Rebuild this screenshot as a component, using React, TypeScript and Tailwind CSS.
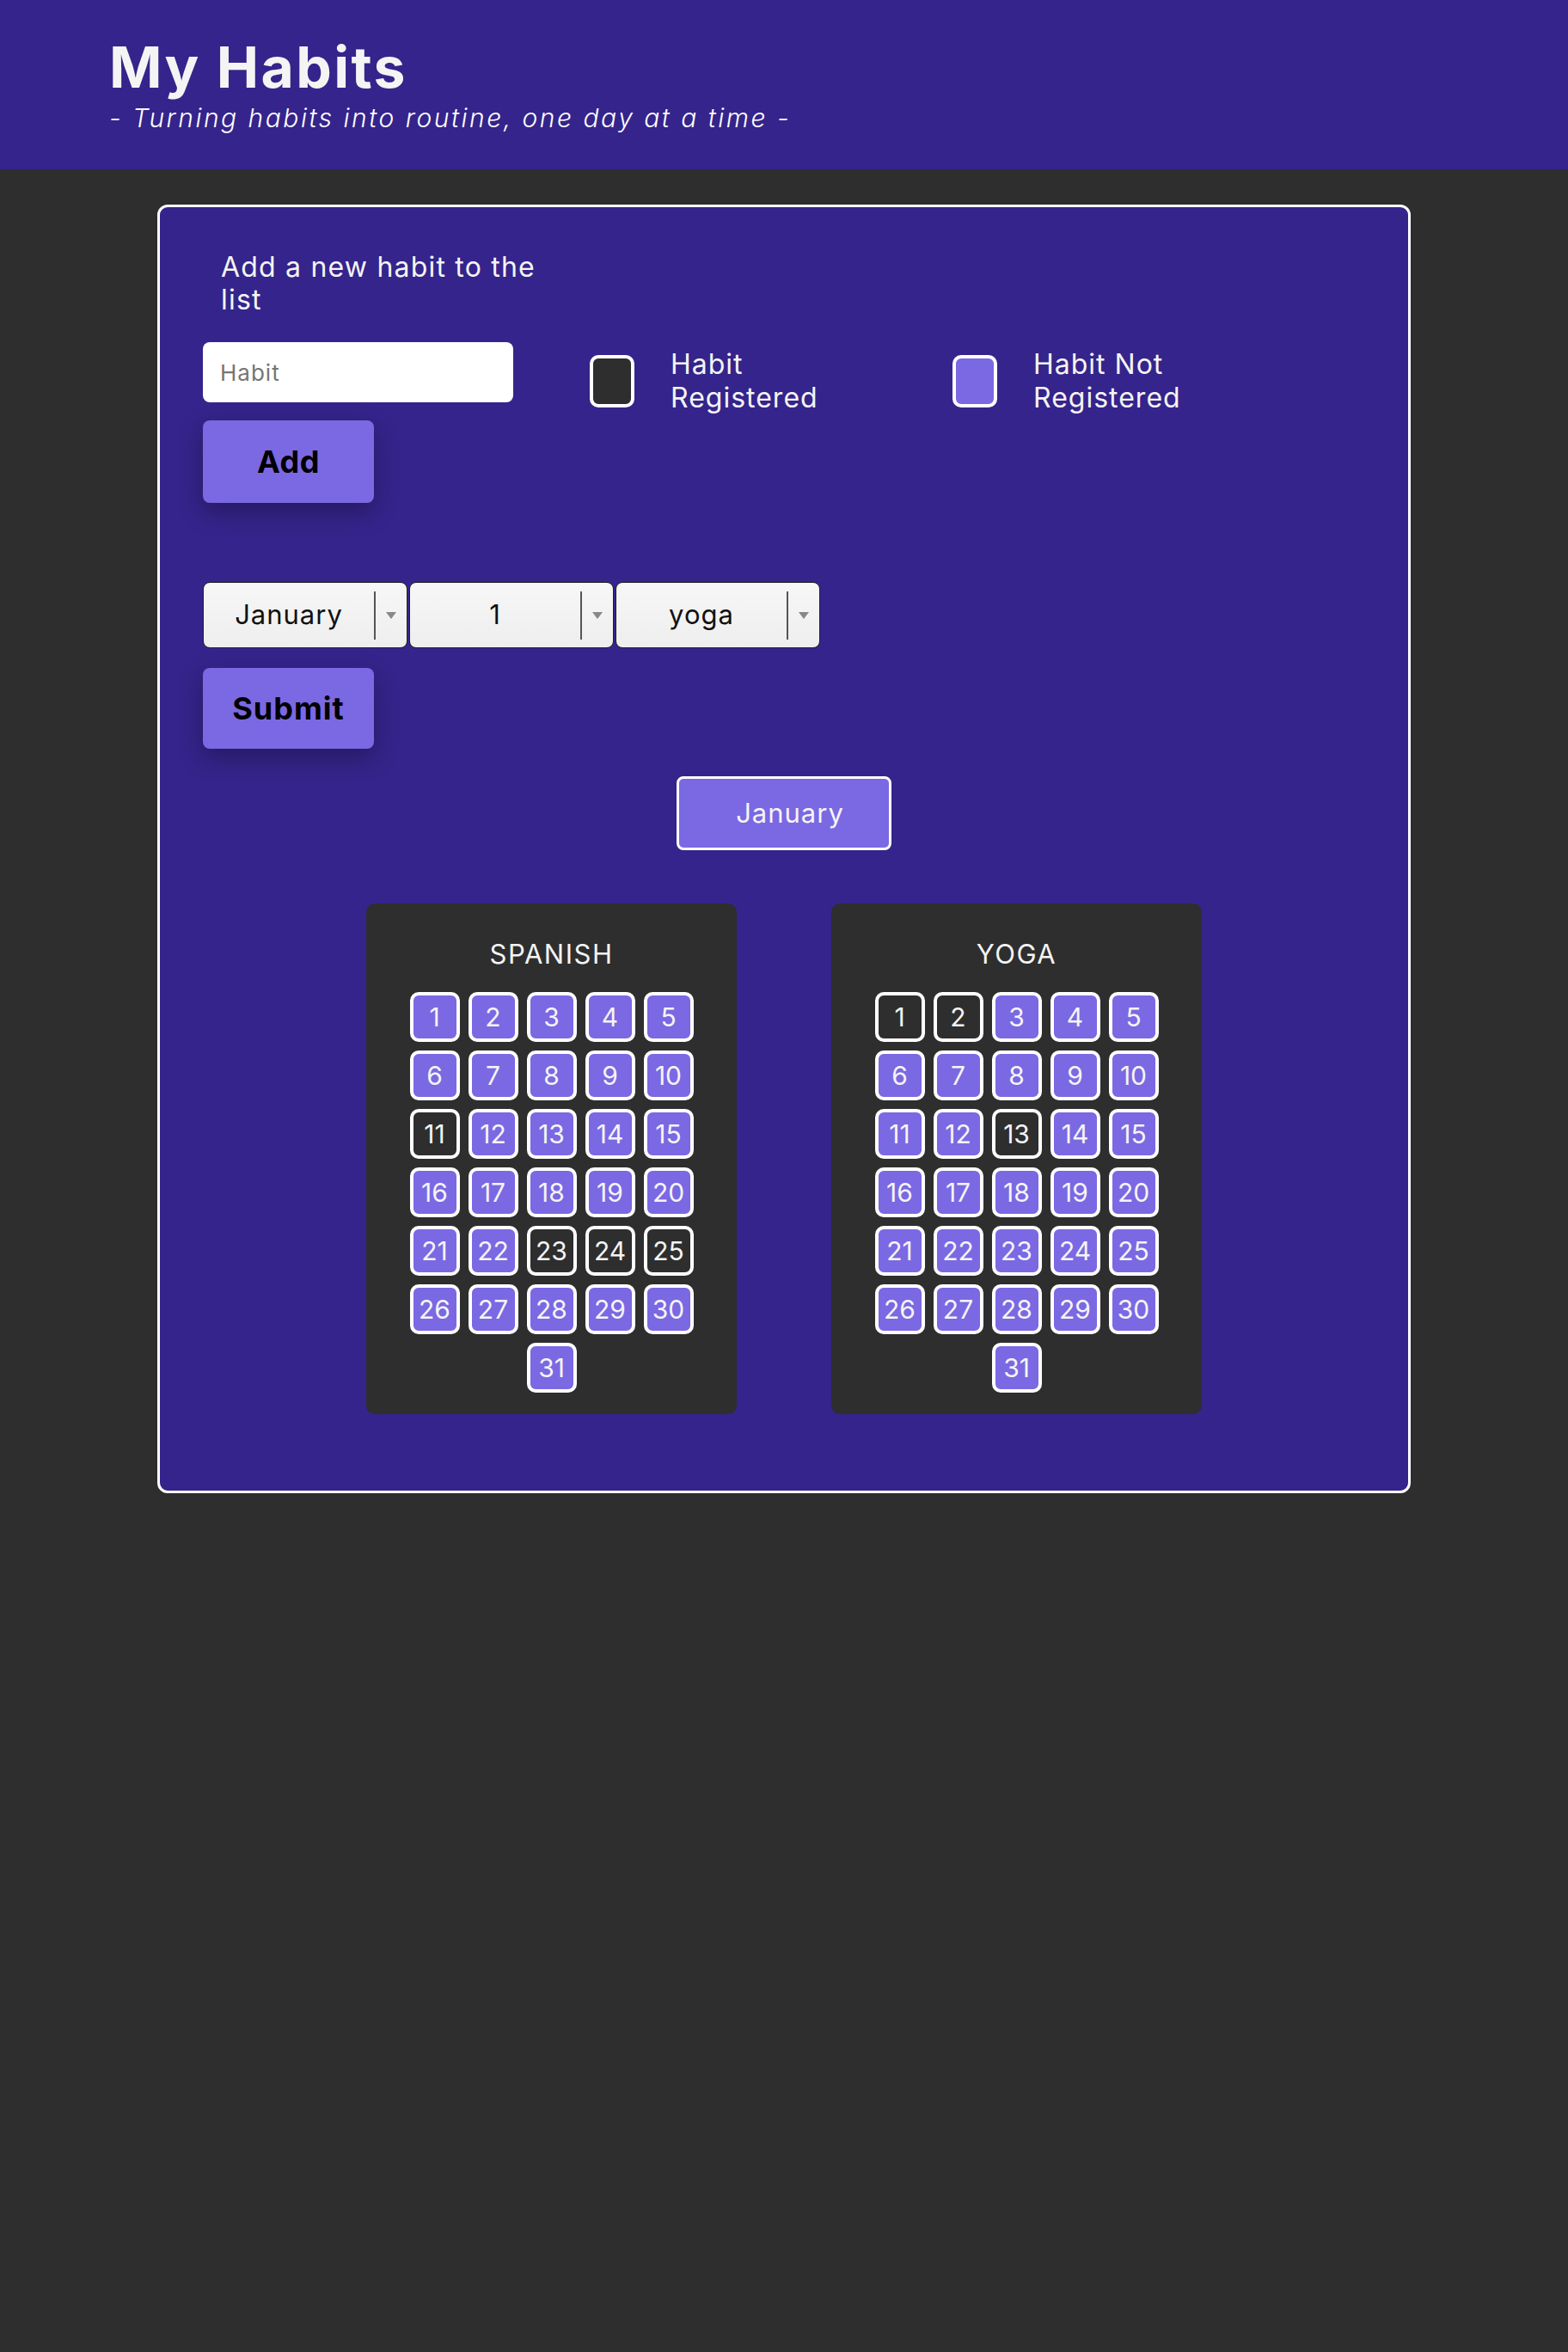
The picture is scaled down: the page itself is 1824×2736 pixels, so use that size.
import React from "react";

const PURPLE = "bg-[#7b68e3]";

const spanishOff = new Set([11, 23, 24, 25]);
const yogaOff = new Set([1, 2, 13]);

function HabitCard({ title, off }: { title: string; off: Set<number> }) {
  const days = Array.from({ length: 31 }, (_, i) => i + 1);
  return (
    <div className="w-[431px] bg-[#2e2e2e] rounded-[10px] pt-[40px] pb-[25px] flex flex-col items-center">
      <div className="text-[31px] leading-[38px] text-[#f4f4f4] font-normal tracking-[1.5px]">{title}</div>
      <div className="mt-[25px] w-[330px] flex flex-wrap justify-center gap-[10px]">
        {days.map((d) => (
          <div
            key={d}
            className={`w-[58px] h-[58px] rounded-[10px] border-[4px] border-white flex items-center justify-center text-[30px] text-[#f4f4f4] ${
              off.has(d) ? "bg-[#2e2e2e]" : "bg-[#7b68e3]"
            }`}
          >
            {d}
          </div>
        ))}
      </div>
    </div>
  );
}

function FakeSelect({ value }: { value: string }) {
  return (
    <div className="w-[238px] h-[77px] rounded-[8px] border border-[#222] bg-gradient-to-b from-[#f7f7f7] to-[#eeeeee] flex items-center">
      <div className="flex-1 text-center text-[31px] tracking-[1px] text-[#111]">{value}</div>
      <div className="w-[2px] h-[56px] bg-[#555]" />
      <div className="w-[36px] flex items-center justify-center">
        <div className="w-0 h-0 border-l-[6px] border-r-[6px] border-t-[8px] border-l-transparent border-r-transparent border-t-[#888]" />
      </div>
    </div>
  );
}

export default function App() {
  return (
    <div className="min-h-screen w-full bg-[#2e2e2e] font-[Inter,sans-serif] pb-[999px]">
      <header className="h-[197px] bg-[#35248b] pl-[127px] pt-[45px]">
        <h1 className="text-[66px] leading-none font-bold text-[#f4f4f4] tracking-[2.4px]">My Habits</h1>
        <p className="mt-[11px] text-[30px] leading-none italic font-light text-white tracking-[2.5px]">
          - Turning habits into routine, one day at a time -
        </p>
      </header>

      <main className="mt-[41px] mx-auto w-[1458px] h-[1499px] border-[3px] border-white rounded-[12px] bg-[#35248b] pl-[50px] pt-[51px]">
        <div className="flex items-start">
          <div className="w-[361px]">
            <h2 className="pl-[21px] text-[32px] leading-[38px] text-[#f4f4f4] font-normal whitespace-nowrap tracking-[1.2px]">
              Add a new habit to the
              <br />
              list
            </h2>
            <input
              placeholder="Habit"
              className="mt-[30px] w-[361px] h-[70px] rounded-[8px] bg-white px-[20px] text-[26px] tracking-[1px] text-[#222] placeholder:text-[#757575] outline-none"
            />
            <button className={`mt-[21px] w-[199px] h-[96px] rounded-[8px] ${PURPLE} text-[36px] font-bold tracking-[0.5px] text-black shadow-[0_10px_28px_rgba(0,0,0,0.3)]`}>
              Add
            </button>
          </div>
          <div className="ml-[89px] mt-[112px] flex">
            <div className="w-[422px] flex items-center">
              <div className="w-[52px] h-[61px] rounded-[10px] border-[4px] border-white bg-[#2e2e2e]" />
              <div className="ml-[42px] text-[32px] leading-[39px] tracking-[1px] text-[#f4f4f4]">
                Habit
                <br />
                Registered
              </div>
            </div>
            <div className="w-[422px] flex items-center">
              <div className="w-[52px] h-[61px] rounded-[10px] border-[4px] border-white bg-[#7b68e3]" />
              <div className="ml-[42px] text-[32px] leading-[39px] tracking-[1px] text-[#f4f4f4]">
                Habit Not
                <br />
                Registered
              </div>
            </div>
          </div>
        </div>

        <div className="mt-[92px] flex gap-[2px]">
          <FakeSelect value="January" />
          <FakeSelect value="1" />
          <FakeSelect value="yoga" />
        </div>

        <button className={`mt-[23px] w-[199px] h-[94px] rounded-[8px] ${PURPLE} text-[36px] font-bold tracking-[1px] text-black shadow-[0_10px_28px_rgba(0,0,0,0.3)]`}>
          Submit
        </button>

        <div className="-ml-[50px] flex flex-col items-center">
          <button className={`mt-[32px] w-[250px] h-[86px] rounded-[8px] border-[3px] border-white ${PURPLE} text-[31px] tracking-[1px] text-[#f4f4f4] pl-[14px]`}>
            January
          </button>
          <div className="mt-[62px] flex gap-[110px]">
            <HabitCard title="SPANISH" off={spanishOff} />
            <HabitCard title="YOGA" off={yogaOff} />
          </div>
        </div>
      </main>
    </div>
  );
}
